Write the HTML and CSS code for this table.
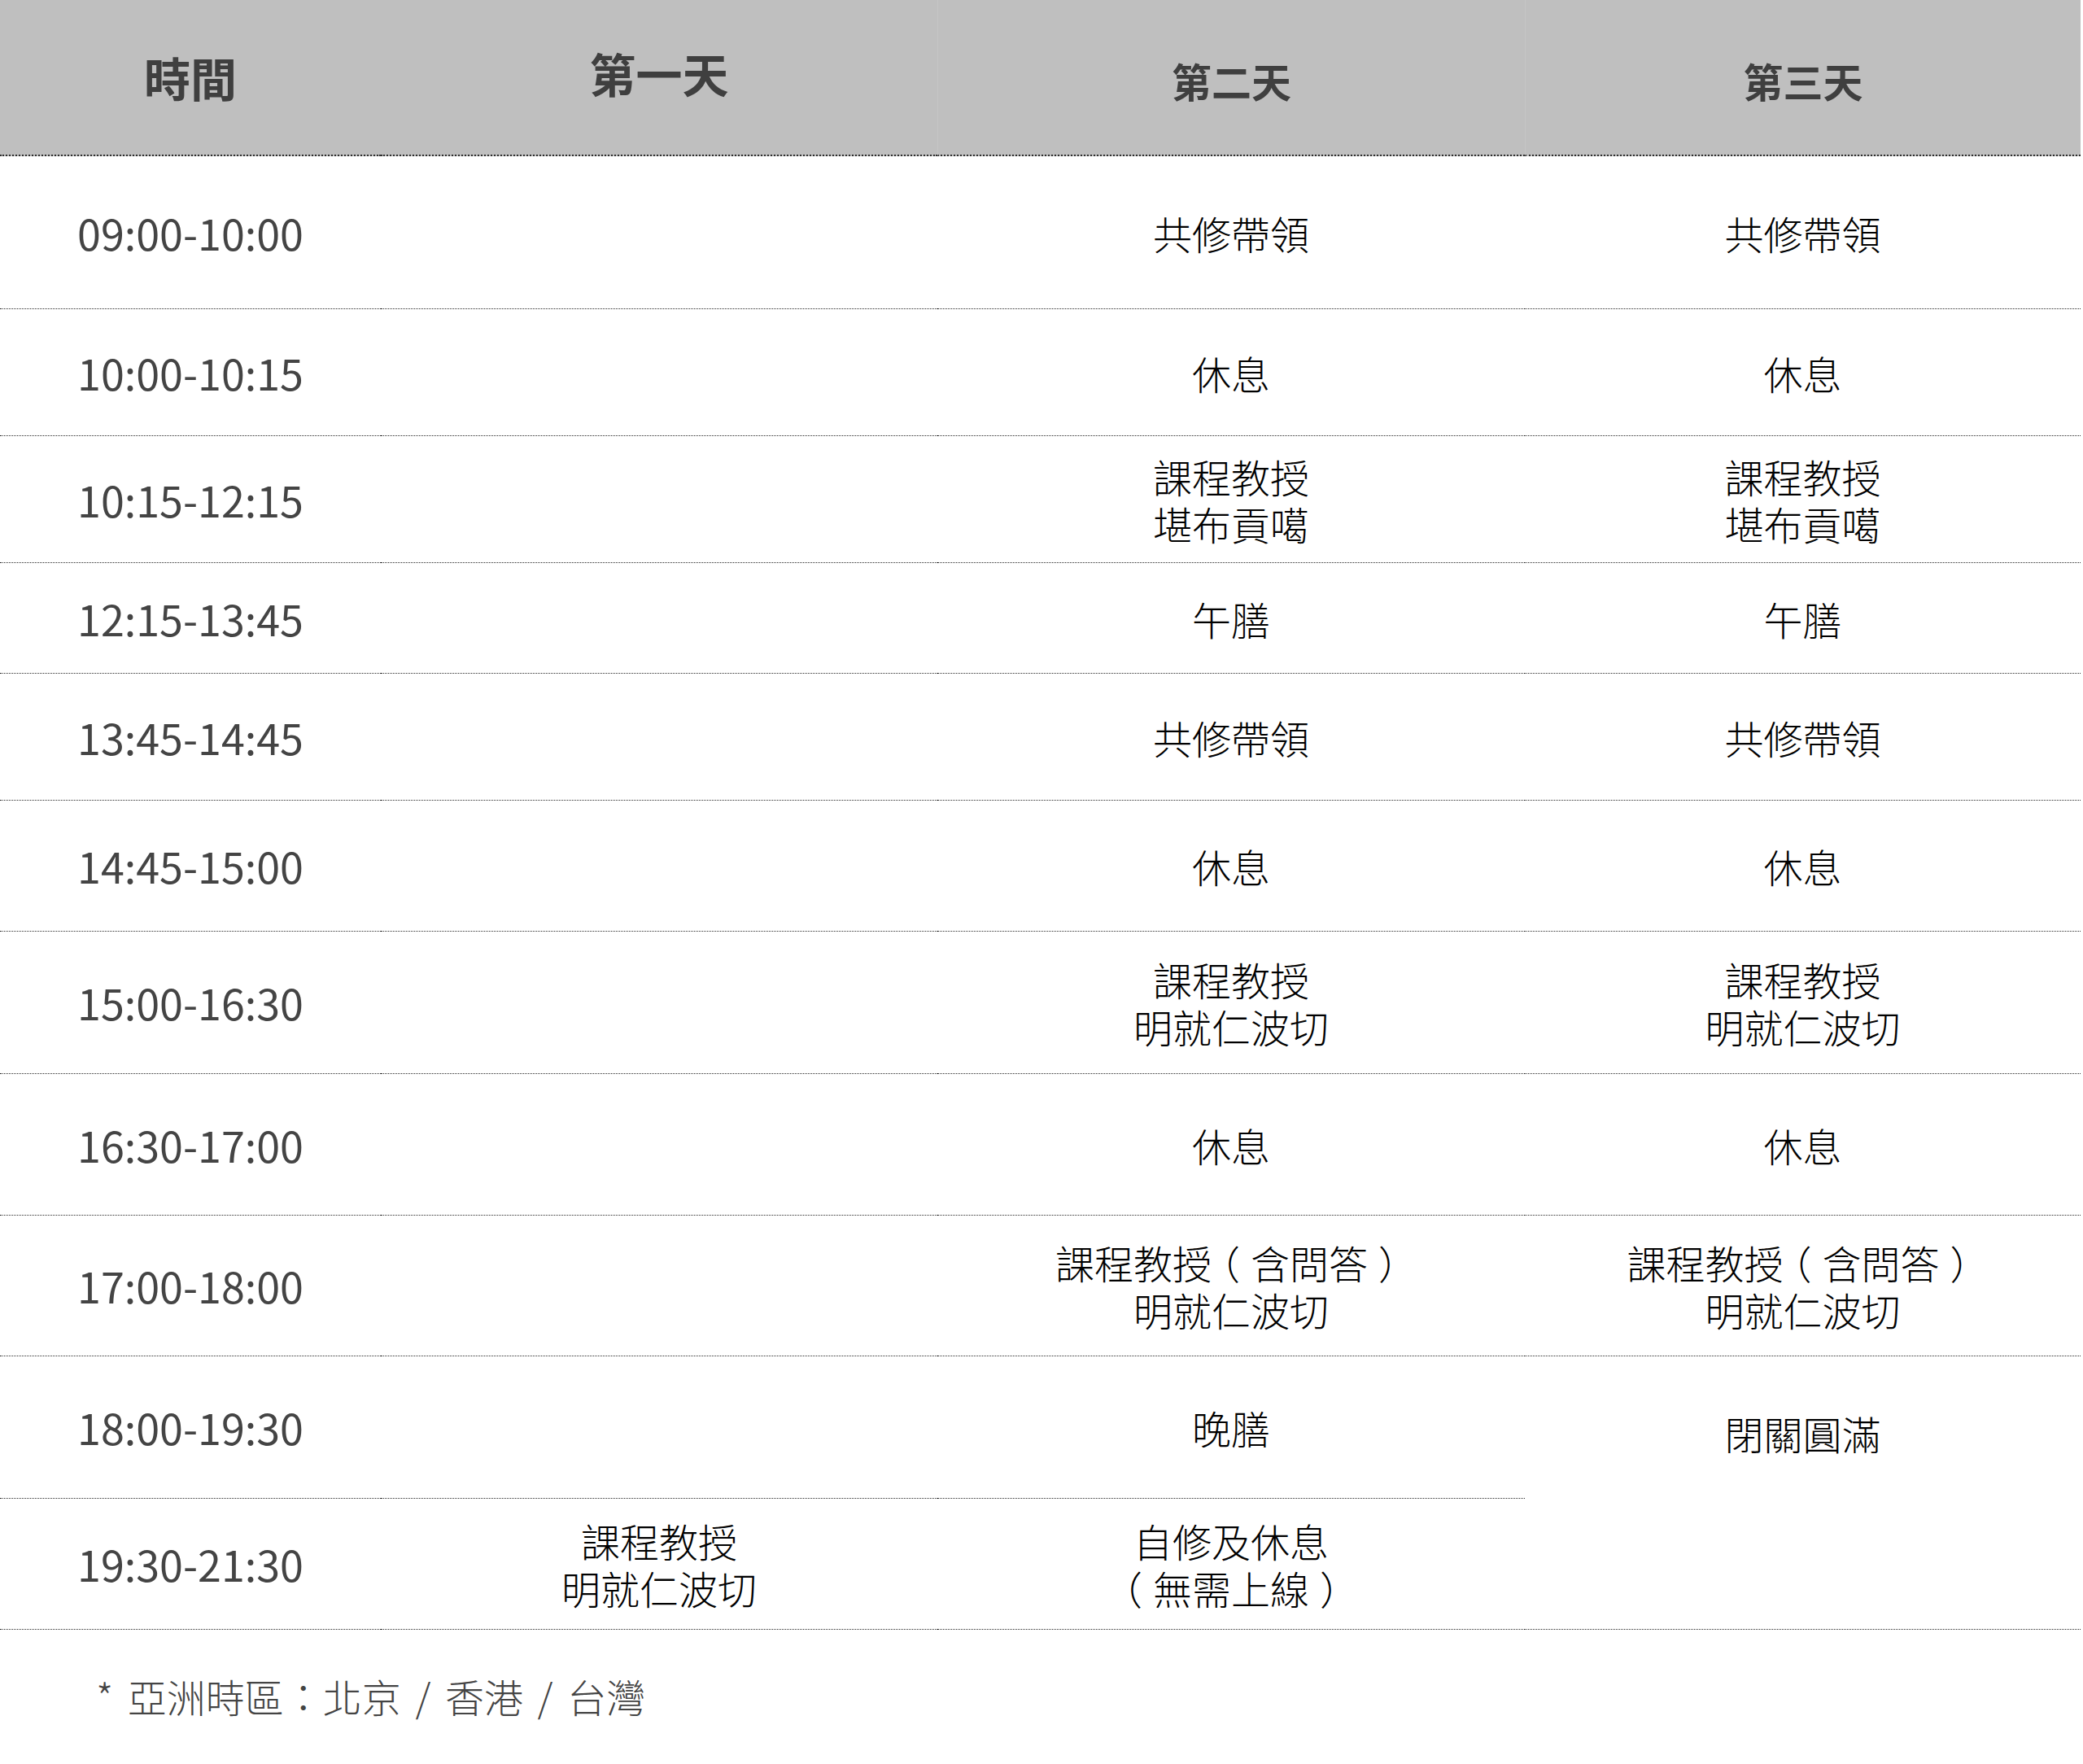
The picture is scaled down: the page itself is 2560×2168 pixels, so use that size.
FILE: index.html
```html
<!DOCTYPE html>
<html lang="zh-Hant">
<head>
<meta charset="utf-8">
<title>課程時間表</title>
<link rel="stylesheet" href="styles.css">
</head>
<body>
<div class="page">
  <table class="schedule">
    <colgroup>
      <col class="c-time">
      <col class="c-day1">
      <col class="c-day2">
      <col class="c-day3">
    </colgroup>
    <thead>
      <tr>
        <th class="h-big h-time">時間</th>
        <th class="h-big h-day1">第一天</th>
        <th class="h-small h-div">第二天</th>
        <th class="h-small h-div">第三天</th>
      </tr>
    </thead>
    <tbody>
      <tr>
        <td class="time">09:00-10:00</td><td></td><td>共修帶領</td><td>共修帶領</td>
      </tr>
      <tr>
        <td class="time">10:00-10:15</td><td></td><td>休息</td><td>休息</td>
      </tr>
      <tr>
        <td class="time">10:15-12:15</td><td></td><td>課程教授<br>堪布貢噶</td><td>課程教授<br>堪布貢噶</td>
      </tr>
      <tr>
        <td class="time">12:15-13:45</td><td></td><td>午膳</td><td>午膳</td>
      </tr>
      <tr>
        <td class="time">13:45-14:45</td><td></td><td>共修帶領</td><td>共修帶領</td>
      </tr>
      <tr>
        <td class="time">14:45-15:00</td><td></td><td>休息</td><td>休息</td>
      </tr>
      <tr>
        <td class="time">15:00-16:30</td><td></td><td>課程教授<br>明就仁波切</td><td>課程教授<br>明就仁波切</td>
      </tr>
      <tr>
        <td class="time">16:30-17:00</td><td></td><td>休息</td><td>休息</td>
      </tr>
      <tr>
        <td class="time">17:00-18:00</td><td></td><td>課程教授<span class="po">（</span>含問答<span class="pc">）</span><br>明就仁波切</td><td>課程教授<span class="po">（</span>含問答<span class="pc">）</span><br>明就仁波切</td>
      </tr>
      <tr>
        <td class="time">18:00-19:30</td><td></td><td>晚膳</td><td class="open-end">閉關圓滿</td>
      </tr>
      <tr>
        <td class="time">19:30-21:30</td><td>課程教授<br>明就仁波切</td><td>自修及休息<br><span class="po">（</span>無需上線<span class="pc">）</span></td><td></td>
      </tr>
    </tbody>
  </table>
  <p class="note">* 亞洲時區：北京 / 香港 / 台灣</p>
</div>
</body>
</html>
```
FILE: styles.css
```css
html, body {
  margin: 0;
  padding: 0;
  background: #ffffff;
}

body {
  font-family: "Noto Sans CJK TC", "Noto Sans", sans-serif;
  color: #111111;
  text-spacing-trim: space-all;
}

.page {
  width: 2560px;
}

.schedule {
  width: 2557px;
  border-collapse: separate;
  border-spacing: 0;
  table-layout: fixed;
}

.c-time { width: 468px; }
.c-day1 { width: 684px; }
.c-day2 { width: 722px; }
.c-day3 { width: 683px; }

.schedule thead tr {
  height: 192px;
}

.schedule th {
  padding: 0;
  background: #bfbfbf;
  border-bottom: 2px dotted #2e2e2e;
  color: #3f3f3f;
  font-weight: 700;
  text-align: center;
  vertical-align: top;
}

.schedule th.h-big {
  font-size: 57px;
  line-height: 57px;
}

.schedule th.h-time {
  padding-top: 66px;
}

.schedule th.h-day1 {
  padding-top: 61px;
}

.schedule th.h-small {
  font-size: 49px;
  line-height: 49px;
  padding-top: 74px;
}

.schedule th.h-div {
  border-left: 1px solid #c5c5c5;
}

.schedule td {
  padding: 0;
  border-bottom: 1px dotted #2a2a2a;
  text-align: center;
  vertical-align: middle;
  font-size: 48px;
  font-weight: 300;
  line-height: 58px;
  color: #000000;
}

.schedule td.time {
  font-size: 52px;
  font-weight: 400;
  color: #444444;
}

.schedule td.open-end {
  border-bottom: none;
  padding-top: 12px;
}

.po {
  position: relative;
  left: -13px;
}

.pc {
  position: relative;
  left: 13px;
}

.schedule tbody tr:nth-child(1) { height: 188px; }
.schedule tbody tr:nth-child(2) { height: 156px; }
.schedule tbody tr:nth-child(3) { height: 156px; }
.schedule tbody tr:nth-child(4) { height: 136px; }
.schedule tbody tr:nth-child(5) { height: 156px; }
.schedule tbody tr:nth-child(6) { height: 161px; }
.schedule tbody tr:nth-child(7) { height: 175px; }
.schedule tbody tr:nth-child(8) { height: 174px; }
.schedule tbody tr:nth-child(9) { height: 173px; }
.schedule tbody tr:nth-child(10) { height: 175px; }
.schedule tbody tr:nth-child(11) { height: 161px; }

.note {
  margin: 51px 0 0 0;
  padding-left: 118px;
  font-size: 48px;
  font-weight: 300;
  line-height: 60px;
  color: #444444;
  white-space: pre;
  word-spacing: 7px;
}
```
